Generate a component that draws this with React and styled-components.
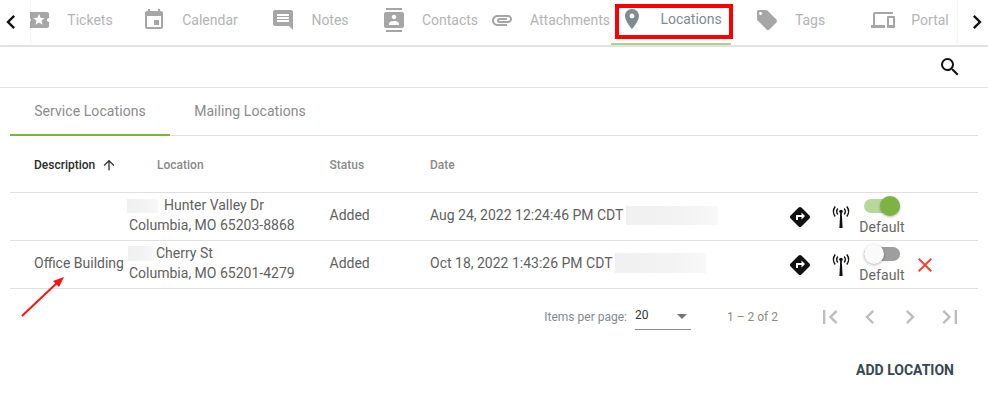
import React from "react";
import styled, { createGlobalStyle } from "styled-components";
import {
  MdLocalActivity, MdEvent, MdInsertComment, MdContacts, MdAttachment, MdPlace, MdLocalOffer,
  MdOutlineDevices, MdSearch, MdDirections, MdClose, MdFirstPage, MdLastPage, MdChevronLeft,
  MdChevronRight, MdArrowUpward, MdArrowDropDown,
} from "react-icons/md";

const Global = createGlobalStyle`
  html, body { margin: 0; padding: 0; background: #fff; }
  body { font-family: Roboto, "Liberation Sans", sans-serif; font-size: 14px; color: rgba(0,0,0,.72); }
`;
const Page = styled.div`position: relative; width: 988px; height: 409px; overflow: hidden; background: #fff;`;
const TabBar = styled.div`display: flex; height: 47px; box-sizing: border-box; border-bottom: 2px solid #e2e2e2;`;
const Scroller = styled.button`
  flex: 0 0 ${p => p.$w}px; min-width: 0; border: 0; background: #fff; position: relative; z-index: 1;
  display: flex; align-items: center; justify-content: center; color: #111;
  height: 45px; padding: 0 0 1px 0;
  box-shadow: ${p => (p.$left ? "1px 0 2px -1px rgba(0,0,0,.14)" : "-1px 0 2px -1px rgba(0,0,0,.14)")};
  svg { flex: none; transform: translateX(${p => (p.$left ? -4 : 4)}px); }
`;
const TabViewport = styled.div`flex: 1; overflow: hidden; min-width: 0;`;
const TabStrip = styled.div`display: flex; margin-left: -20px; width: 1000px;`;
const NavTab = styled.div`
  flex: 0 0 120px; height: 45px; box-sizing: border-box; display: flex; align-items: center; justify-content: center;
  gap: 16px; font-size: 14px; padding-bottom: ${p => (p.$active ? 6 : 5)}px; white-space: nowrap;
  color: ${p => (p.$active ? "#7f8b92" : "#b4b4b4")};
  border-bottom: ${p => (p.$active ? "2px solid #aed18d" : "0")};
  margin-left: ${p => (p.$active ? "1px" : "0")};
  margin-right: ${p => (p.$active ? "-1px" : "0")};
  svg { flex: none; color: ${p => (p.$active ? "#7f8b92" : "#a6a6a6")}; }
`;
const SearchRow = styled.div`
  height: 41px; box-sizing: border-box; border-bottom: 1px solid #e2e2e2; display: flex; align-items: center;
  justify-content: flex-end; padding-right: 26px; color: #111;
`;
const SubTabs = styled.div`display: flex; margin: 0 10px; height: 48px; box-sizing: border-box; border-bottom: 1px solid #e0e0e0;`;
const SubTab = styled.div`
  flex: 0 0 160px; height: 48px; box-sizing: border-box; display: flex; align-items: center; justify-content: center;
  font-size: 14px; letter-spacing: .07px; color: #8b8b8b; padding-bottom: ${p => (p.$active ? 0 : 2)}px;
  border-bottom: ${p => (p.$active ? "2px solid #7cb342" : "0")};
`;
const Table = styled.div`margin: 0 10px;`;
const HeaderRow = styled.div`
  display: grid; grid-template-columns: 123px 172.5px 100.5px 1fr; height: 57px; box-sizing: border-box;
  align-items: center; padding-left: 24px; padding-top: 1px; border-bottom: 1px solid #e0e0e0;
  font-size: 12px; font-weight: 500; color: #8a8a8a;
`;
const SortHead = styled.div`display: flex; align-items: center; gap: 6px; color: #2b2b2b; svg { color: #333; }`;
const Row = styled.div`
  display: grid; grid-template-columns: 95px 200.5px 100.5px 358px 1fr; height: 48px; box-sizing: border-box;
  align-items: center; padding: 0 0 3px 24px; border-bottom: 1px solid #e0e0e0; font-size: 14px; color: #5f5f5f;
`;
const Address = styled.div`line-height: 20.5px; white-space: nowrap;`;
const Blur = styled.span`
  display: inline-block; vertical-align: middle; width: ${p => p.$w}px; height: ${p => p.$h}px;
  margin: ${p => p.$m}; background: linear-gradient(90deg, #f0f0f0, #f3f3f3 60%, #f8f8f8);
`;
const DateCell = styled.div`display: flex; align-items: center; white-space: nowrap;`;
const Actions = styled.div`display: flex; align-items: center; color: #111; position: relative;`;
const IconSlot = styled.div`flex: 0 0 ${p => p.$w}px; display: flex; justify-content: ${p => p.$j || "flex-start"}; padding-top: 3px;`;
const ToggleWrap = styled.div`display: flex; flex-direction: column; align-items: center; width: 46px; color: #666;`;
const Track = styled.div`
  position: relative; width: 36px; height: 14px; border-radius: 7px; margin: 3px 0;
  background: ${p => (p.$on ? "#b7d89a" : "#9e9e9e")};
`;
const Thumb = styled.div`
  position: absolute; top: -3px; left: ${p => (p.$on ? 16 : 0)}px; width: 20px; height: 20px; border-radius: 50%;
  background: ${p => (p.$on ? "#7cb342" : "#fafafa")};
  box-shadow: 0 1px 3px rgba(0,0,0,.3);
`;
const Label = styled.div`font-size: 14px; line-height: 16px; margin: 3px 0 -1px; letter-spacing: .07px;`;
const DeleteIcon = styled.div`display: flex; color: #f44336; margin-left: 8px; padding-top: 3px;`;
const Paginator = styled.div`
  display: flex; align-items: center; justify-content: flex-end; height: 56px; padding-right: 18px;
  font-size: 12px; color: #8a8a8a;
`;
const PerPage = styled.div`margin-right: 8px; color: #7f8b92;`;
const Select = styled.div`
  width: 56px; height: 24px; box-sizing: border-box; border-bottom: 1px solid #8a8a8a; display: flex; align-items: flex-start;
  justify-content: space-between; color: #333; line-height: 16px; margin-top: 1px; margin-right: 36px; padding-top: 1px;
  svg { color: #757575; margin-right: -3px; margin-top: -3px; }
`;
const Range = styled.div`margin-right: 32px; color: #8d8d7f;`;
const PageBtn = styled.div`width: 40px; display: flex; justify-content: center; color: #bdbdbd;`;
const Footer = styled.div`display: flex; justify-content: flex-end; padding: 17px 34px 0 0;`;
const AddBtn = styled.div`font-size: 14px; line-height: 16px; font-weight: 700; color: #37474f;`;
const Highlight = styled.div`
  position: absolute; left: 615px; top: 4px; width: 118px; height: 35px; box-sizing: border-box;
  border: 4px solid #f00; pointer-events: none;
`;
const Arrow = styled.svg`position: absolute; left: 18px; top: 272px; pointer-events: none;`;

const Antenna = () => (
  <svg width="24" height="26" viewBox="0 0 24 26" fill="none" stroke="#111">
    <circle cx="12" cy="7.5" r="1.8" fill="#111" stroke="none" />
    <path d="M11.2 9h1.6l.8 15h-3.2z" fill="#111" stroke="none" />
    <path d="M8.8 4.5a5 5 0 0 0 0 6M15.2 4.5a5 5 0 0 1 0 6" strokeWidth="1.4" />
    <path d="M6.2 2.5a8.5 8.5 0 0 0 0 10M17.8 2.5a8.5 8.5 0 0 1 0 10" strokeWidth="1.4" />
  </svg>
);

const navTabs = [
  ["Tickets", MdLocalActivity], ["Calendar", MdEvent], ["Notes", MdInsertComment], ["Contacts", MdContacts],
  ["Attachments", MdAttachment], ["Locations", MdPlace, true], ["Tags", MdLocalOffer], ["Portal", MdOutlineDevices],
];

const Toggle = ({ on }) => (
  <ToggleWrap>
    <Track $on={on}><Thumb $on={on} /></Track>
    <Label>Default</Label>
  </ToggleWrap>
);

const RowActions = ({ on, del }) => (
  <Actions>
    <IconSlot $w={34}><MdDirections size={24} /></IconSlot>
    <IconSlot $w={37} $j="center"><Antenna /></IconSlot>
    <Toggle on={on} />
    {del && <DeleteIcon><MdClose size={24} /></DeleteIcon>}
  </Actions>
);

export default function App() {
  return (
    <Page>
      <Global />
      <TabBar>
        <Scroller $w={30} $left><MdChevronLeft size={28} /></Scroller>
        <TabViewport>
          <TabStrip>
            {navTabs.map(([label, Icon, active]) => (
              <NavTab key={label} $active={active}><Icon size={24} />{label}</NavTab>
            ))}
          </TabStrip>
        </TabViewport>
        <Scroller $w={30}><MdChevronRight size={28} /></Scroller>
      </TabBar>
      <SearchRow><MdSearch size={24} /></SearchRow>
      <SubTabs>
        <SubTab $active>Service Locations</SubTab>
        <SubTab>Mailing Locations</SubTab>
      </SubTabs>
      <Table>
        <HeaderRow>
          <SortHead>Description<MdArrowUpward size={16} /></SortHead>
          <div>Location</div>
          <div>Status</div>
          <div>Date</div>
        </HeaderRow>
        <Row>
          <div />
          <Address><Blur $w={31} $h={14} $m="0 6px 0 -2px" />Hunter Valley Dr<br />Columbia, MO 65203-8868</Address>
          <div>Added</div>
          <DateCell>Aug 24, 2022 12:24:46 PM CDT<Blur $w={92} $h={19} $m="0 0 0 3px" /></DateCell>
          <RowActions on />
        </Row>
        <Row>
          <div>Office Building</div>
          <Address><Blur $w={26} $h={15} $m="0 2px 0 -1px" />Cherry St<br />Columbia, MO 65201-4279</Address>
          <div>Added</div>
          <DateCell>Oct 18, 2022 1:43:26 PM CDT<Blur $w={91} $h={20} $m="0 0 0 2px" /></DateCell>
          <RowActions del />
        </Row>
      </Table>
      <Paginator>
        <PerPage>Items per page:</PerPage>
        <Select>20<MdArrowDropDown size={24} /></Select>
        <Range>1 – 2 of 2</Range>
        <PageBtn><MdFirstPage size={28} /></PageBtn>
        <PageBtn><MdChevronLeft size={28} /></PageBtn>
        <PageBtn><MdChevronRight size={28} /></PageBtn>
        <PageBtn><MdLastPage size={28} /></PageBtn>
      </Paginator>
      <Footer><AddBtn>ADD LOCATION</AddBtn></Footer>
      <Highlight />
      <Arrow width="50" height="48" viewBox="0 0 50 48">
        <path d="M4 44 L41 9" stroke="#f11" strokeWidth="2" />
        <path d="M46 5 L41 15 L35 9z" fill="#f11" />
      </Arrow>
    </Page>
  );
}
